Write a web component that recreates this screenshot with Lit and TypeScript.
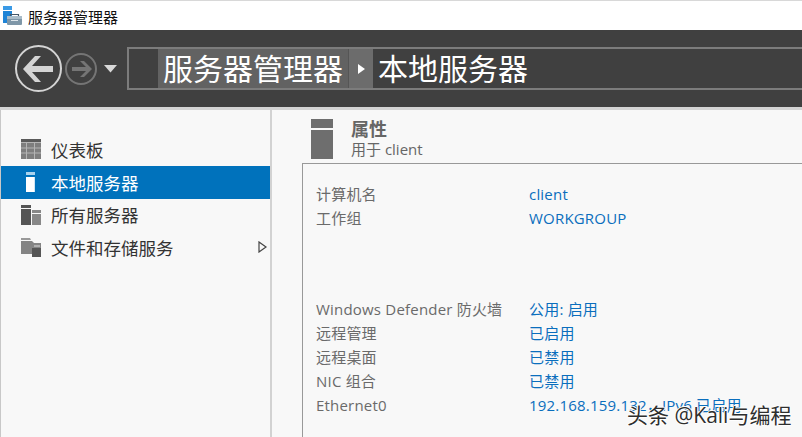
import { LitElement, html, css } from "lit";
import { customElement } from "lit/decorators.js";

@customElement("app-root")
export class AppRoot extends LitElement {
  static styles = css`
    :host { display: block; width: 802px; height: 437px; overflow: hidden; position: relative; background: #f8f8f8; font-family: "Open Sans", "Noto Sans CJK SC", sans-serif; }
    * { box-sizing: border-box; }
    .titlebar { height: 30px; background: #fff; display: flex; align-items: center; padding: 1px 0 0 3px; gap: 5px; font-size: 15px; color: #111; border-top: 1px solid #d8d8d8; }
    .titlebar svg { display: block; }
    .header { height: 77px; background: #404040; display: flex; align-items: flex-start; padding: 15px 0 0 15px; }
    .nav { display: flex; align-items: center; height: 48px; width: 112px; flex: none; }
    .nav svg { display: block; }
    .small { margin-left: 1px; }
    .drop { margin-left: 6px; }
    .crumb { flex: 1; margin-top: 2px; height: 43px; border: 2px solid #7c7c7c; border-right: none; display: flex; color: #fff; font-size: 30px; line-height: 39px; }
    .gap { width: 29px; }
    .seg { background: #626262; width: 190px; padding-left: 5px; white-space: nowrap; }
    .arrow { width: 25px; background: #6c6c6c; display: flex; align-items: center; justify-content: center; border-left: 1px solid #555; }
    .cur { padding-left: 5px; white-space: nowrap; }
    .strip { height: 3px; background: #d4d4d4; }
    .main { display: flex; height: 327px; }
    .side { width: 272px; flex: none; background: #f8f8f8; border-right: 2px solid #d2d2d2; border-left: 1px solid #c8c8c8; padding-top: 23px; }
    .item { height: 32.5px; display: flex; align-items: center; font-size: 17.5px; color: #333; padding-left: 20px; position: relative; }
    .item svg { display: block; width: 20px; height: 20px; flex: none; margin-right: 10px; }
    .item.sel { background: #0072bc; color: #fff; height: 33px; }
    .item .tri { margin-left: auto; margin-right: 2px; width: 10px; height: 12px; }
    .content { flex: 1; padding: 9px 0 0 30px; min-width: 0; }
    .head { display: flex; height: 44px; padding-left: 9px; }
    .head svg { display: block; flex: none; margin: 0 18px 0 0; }
    .h-title { font-size: 18px; font-weight: 700; color: #666; line-height: 20px; }
    .h-sub { font-size: 15px; color: #666; line-height: 20px; }
    .panel { height: 300px; border-left: 1px solid #999; border-top: 1px solid #999; padding: 18px 0 0 13px; font-size: 15px; line-height: 24px; letter-spacing: 0.2px; }
    .row { display: flex; height: 24px; }
    .k { width: 213px; color: #6a6a6a; flex: none; white-space: nowrap; }
    .v { color: #0a6ebd; white-space: nowrap; }
    .spacer { height: 67px; }
    .mark { position: absolute; left: 627px; top: 400px; font-size: 21px; line-height: 30px; color: #2e2e2e; white-space: nowrap;
      text-shadow: -1px 0 0 #fff, 1px 0 0 #fff, 0 -1px 0 #fff, 0 1px 0 #fff; }
  `;

  render() {
    const rows1 = [["计算机名", "client"], ["工作组", "WORKGROUP"]];
    const rows2 = [
      ["Windows Defender 防火墙", "公用: 启用"],
      ["远程管理", "已启用"],
      ["远程桌面", "已禁用"],
      ["NIC 组合", "已禁用"],
      ["Ethernet0", "192.168.159.132，IPv6 已启用"],
    ];
    const row = (r: string[]) => html`<div class="row"><div class="k">${r[0]}</div><div class="v">${r[1]}</div></div>`;
    return html`
      <div class="titlebar">
        <svg width="20" height="20" viewBox="0 0 20 20">
          <rect x="0" y="0" width="9" height="4" fill="#3a9ae6"/>
          <rect x="0" y="5" width="9" height="12" fill="#1f84d6"/>
          <path d="M7.5 10V8.5H15.5V10" fill="none" stroke="#45586a" stroke-width="1.2"/>
          <rect x="4" y="10" width="15" height="9" rx="1" fill="#7f97a8"/>
          <rect x="4" y="10" width="15" height="3" fill="#a9bcc9"/>
          <rect x="8" y="14" width="7" height="1" fill="#dfe6eb"/>
        </svg>
        <span>服务器管理器</span>
      </div>
      <div class="header">
        <div class="nav">
          <svg width="48" height="48" viewBox="0 0 48 48">
            <circle cx="23.5" cy="23.5" r="22.5" fill="none" stroke="#d4d4d4" stroke-width="2"/>
            <path d="M8 24L20 11H26L17 21H38V27H17L26 37H20Z" fill="#d4d4d4"/>
          </svg>
          <svg class="small" width="34" height="34" viewBox="0 0 34 34">
            <circle cx="17" cy="17" r="15" fill="none" stroke="#757575" stroke-width="2"/>
            <path d="M28 17L20 9H16L22 15H8V19H22L16 25H20Z" fill="#757575"/>
          </svg>
          <svg class="drop" width="13" height="8" viewBox="0 0 13 8">
            <path d="M0 0H13L6.5 7.5Z" fill="#d8d8d8"/>
          </svg>
        </div>
        <div class="crumb">
          <div class="gap"></div>
          <div class="seg">服务器管理器</div>
          <div class="arrow"><svg width="7" height="10" viewBox="0 0 7 10"><path d="M0 0L7 5L0 10Z" fill="#fff"/></svg></div>
          <div class="cur">本地服务器</div>
        </div>
      </div>
      <div class="strip"></div>
      <div class="main">
        <div class="side">
          <div class="item">
            <svg viewBox="0 0 20 20">
              <rect width="20" height="20" y="0" fill="#b4b4b4"/>
              <rect width="20" height="3" fill="#5a5a5a"/>
              <g fill="#7e7e7e"><rect y="4" width="5" height="4.5"/><rect x="6" y="4" width="7" height="4.5"/><rect x="14" y="4" width="6" height="4.5"/><rect y="9.5" width="5" height="4"/><rect x="6" y="9.5" width="7" height="4"/><rect x="14" y="9.5" width="6" height="4"/><rect y="14.5" width="5" height="5.5"/><rect x="6" y="14.5" width="7" height="5.5"/><rect x="14" y="14.5" width="6" height="5.5"/></g>
            </svg>
            仪表板
          </div>
          <div class="item sel">
            <svg viewBox="0 0 20 20"><rect x="5" y="0" width="9" height="3" fill="#a9d3ee"/><rect x="5" y="5" width="9" height="15" fill="#fff"/><rect x="13" y="5" width="1" height="15" fill="#cfe6f5"/></svg>
            本地服务器
          </div>
          <div class="item">
            <svg viewBox="0 0 20 20"><rect x="0" y="0" width="10" height="3" fill="#555"/><rect x="0" y="4" width="10" height="16" fill="#555"/><rect x="11" y="5" width="9" height="3" fill="#888"/><rect x="11" y="9" width="9" height="11" fill="#888"/></svg>
            所有服务器
          </div>
          <div class="item">
            <svg viewBox="0 0 20 20"><path d="M0 1H9L10 3H0Z" fill="#999"/><path d="M0 4H11L13 6H20V11H11V17H0Z" fill="#848484"/><rect x="11" y="11" width="9" height="10" fill="#555"/><path d="M13 8H19V10H13Z" fill="#b0b0b0"/></svg>
            文件和存储服务
            <svg class="tri" viewBox="0 0 10 12"><path d="M1 1L8 6L1 11Z" fill="none" stroke="#444" stroke-width="1.2"/></svg>
          </div>
        </div>
        <div class="content">
          <div class="head">
            <svg width="22" height="40" viewBox="0 0 22 40"><rect width="22" height="9" fill="#6e6e6e"/><rect y="11" width="22" height="29" fill="#6e6e6e"/></svg>
            <div>
              <div class="h-title">属性</div>
              <div class="h-sub">用于 client</div>
            </div>
          </div>
          <div class="panel">
            ${rows1.map(row)}
            <div class="spacer"></div>
            ${rows2.map(row)}
          </div>
        </div>
      </div>
      <div class="mark">头条 @Kali与编程</div>
    `;
  }
}
